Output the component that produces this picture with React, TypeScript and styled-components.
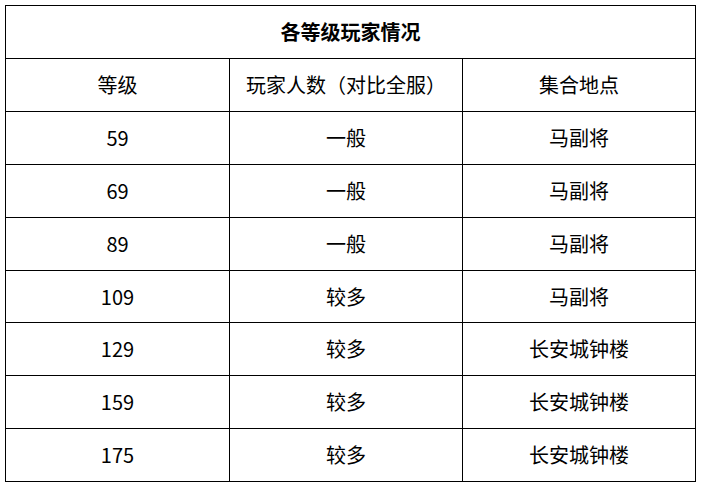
import React from "react";
import styled, { createGlobalStyle } from "styled-components";

const GlobalStyle = createGlobalStyle`
  html, body {
    margin: 0;
    padding: 0;
    background: #ffffff;
  }
  body {
    font-family: "Noto Sans CJK SC", "Noto Sans", sans-serif;
    color: #000000;
  }
`;

const Page = styled.div`
  padding: 5px;
`;

const Table = styled.div`
  display: grid;
  width: 690px;
  grid-template-columns: 224px 233px 233px;
  grid-template-rows: repeat(5, 53px) 52px repeat(3, 53px);
  border-top: 1px solid #000;
  border-left: 1px solid #000;
`;

const Cell = styled.div<{ $span?: number; $bold?: boolean }>`
  grid-column: span ${(p) => p.$span ?? 1};
  display: flex;
  align-items: center;
  justify-content: center;
  box-sizing: border-box;
  border-right: 1px solid #000;
  border-bottom: 1px solid #000;
  font-size: 20px;
  font-weight: ${(p) => (p.$bold ? 700 : 400)};
  line-height: 1;
  color: #000;
  white-space: nowrap;
`;

const rows: [string, string, string][] = [
  ["59", "一般", "马副将"],
  ["69", "一般", "马副将"],
  ["89", "一般", "马副将"],
  ["109", "较多", "马副将"],
  ["129", "较多", "长安城钟楼"],
  ["159", "较多", "长安城钟楼"],
  ["175", "较多", "长安城钟楼"],
];

export default function App() {
  return (
    <>
      <GlobalStyle />
      <Page>
        <Table>
          <Cell $span={3} $bold>
            各等级玩家情况
          </Cell>
          <Cell>等级</Cell>
          <Cell>玩家人数（对比全服）</Cell>
          <Cell>集合地点</Cell>
          {rows.map((r) => (
            <React.Fragment key={r[0]}>
              <Cell>{r[0]}</Cell>
              <Cell>{r[1]}</Cell>
              <Cell>{r[2]}</Cell>
            </React.Fragment>
          ))}
        </Table>
      </Page>
    </>
  );
}
